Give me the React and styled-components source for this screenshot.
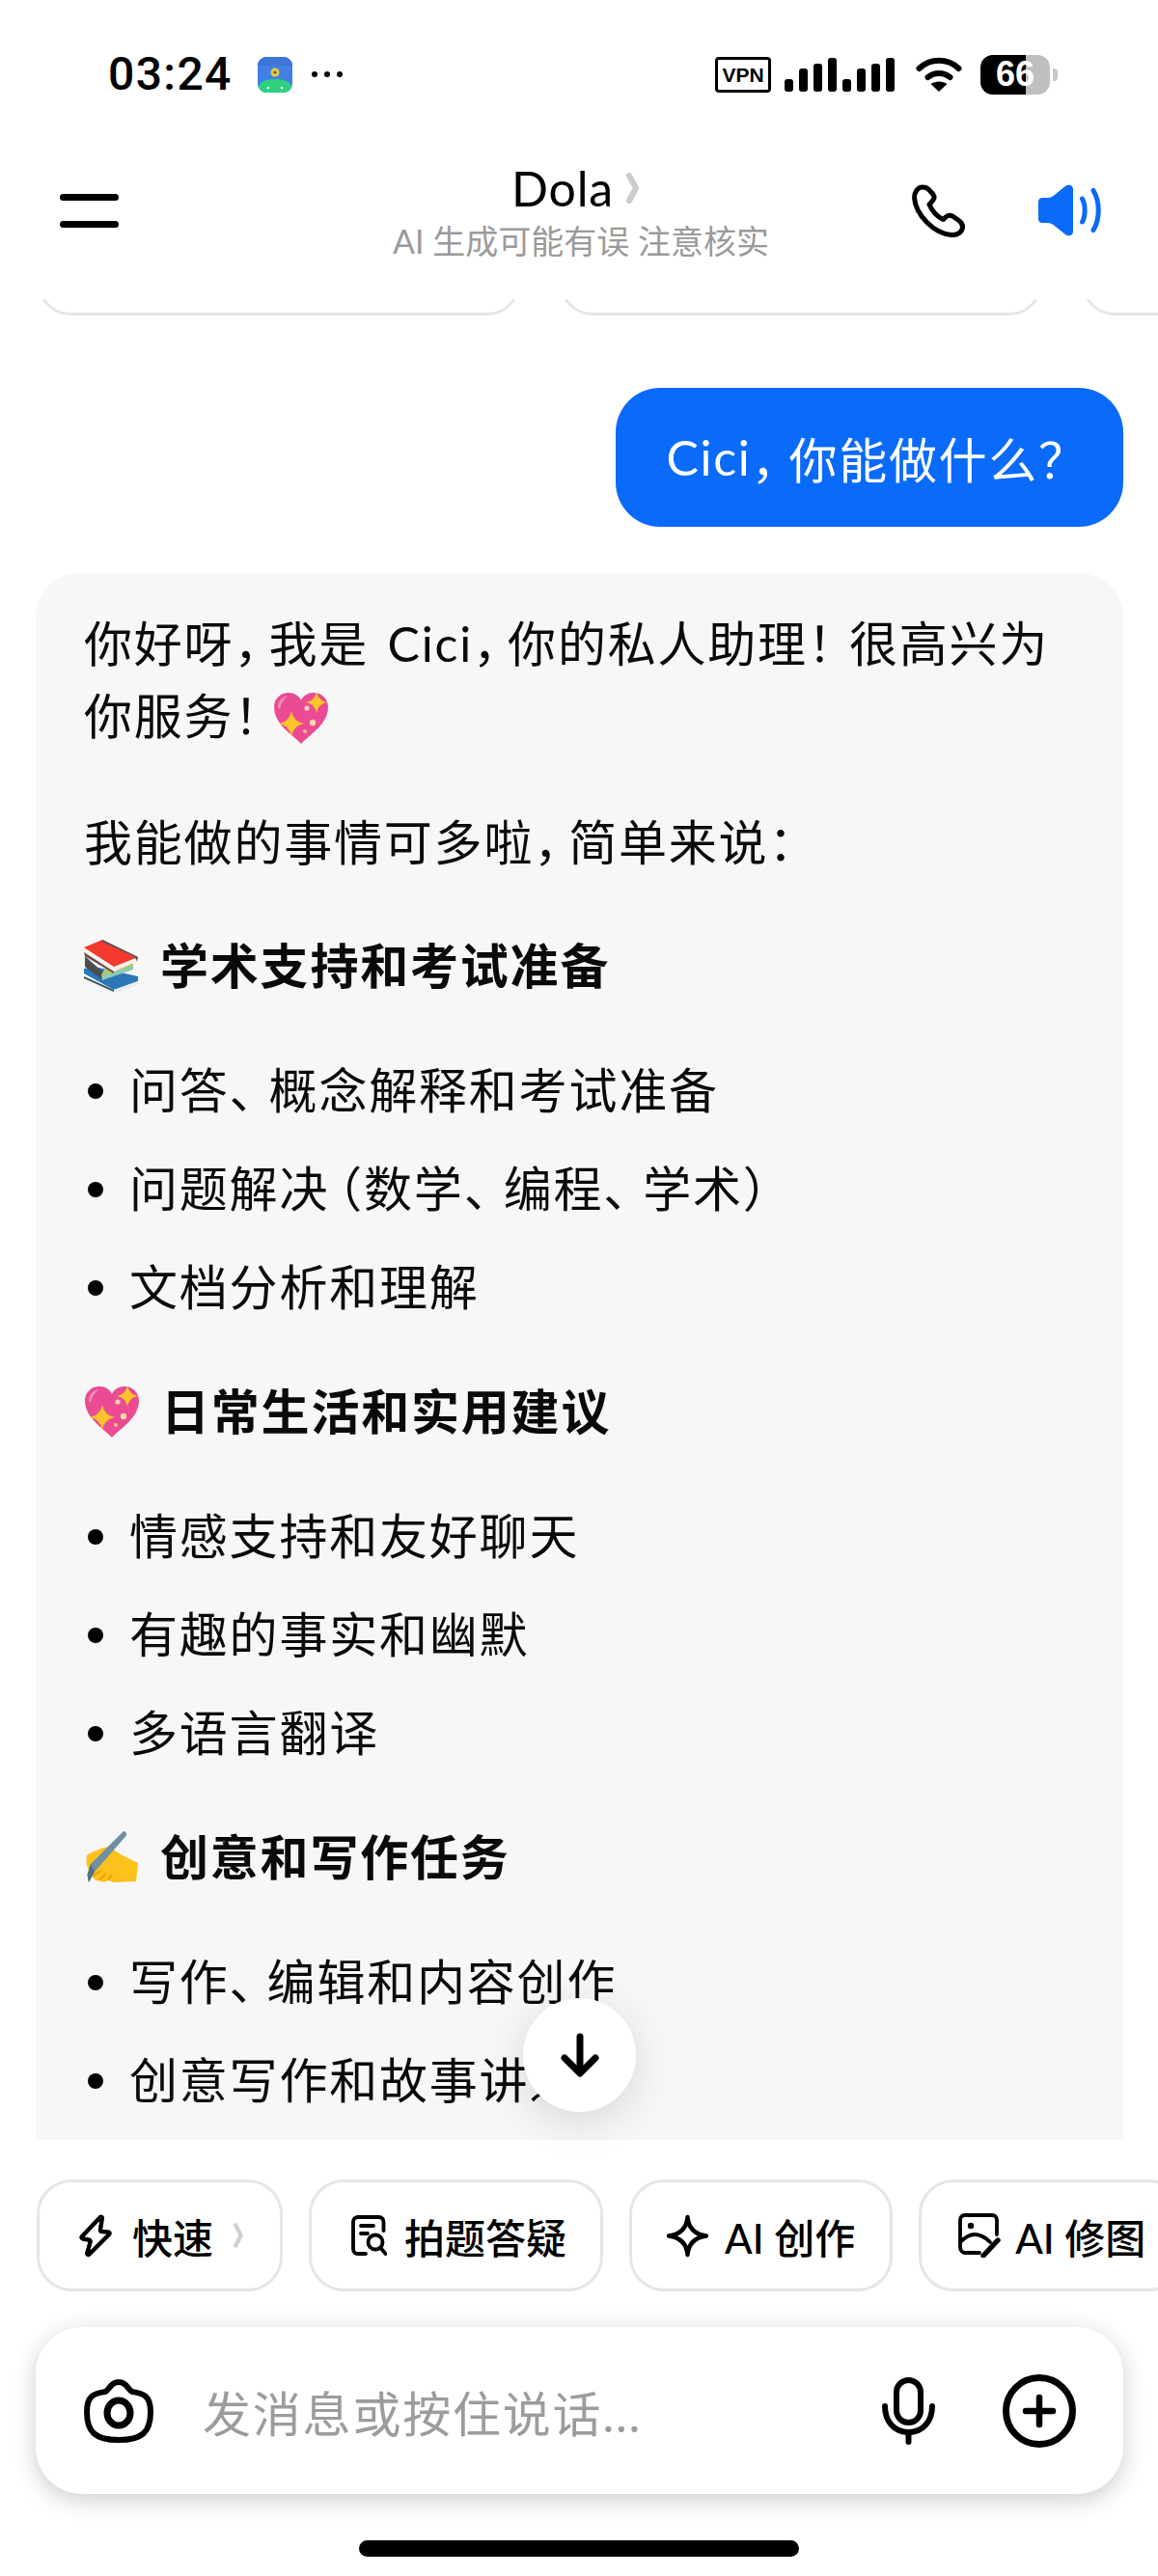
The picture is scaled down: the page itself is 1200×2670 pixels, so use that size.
import React from 'react';
import styled, { createGlobalStyle } from 'styled-components';

const GlobalStyle = createGlobalStyle`
  html, body { margin: 0; padding: 0; background: #fff; }
  * { box-sizing: border-box; }
`;

const Page = styled.div`
  position: relative;
  width: 1200px;
  height: 2670px;
  overflow: hidden;
  display: flex;
  flex-direction: column;
  background: #fff;
  color: #000;
  font-family: "Lato", "Noto Sans CJK SC", sans-serif;
`;

const StatusBar = styled.div`
  flex: 0 0 154px;
  display: flex;
  align-items: center;
  justify-content: space-between;
  padding: 0 104px 0 113px;
  background: #fff;
`;

const StatusGroup = styled.div`
  display: flex;
  align-items: center;
  gap: ${p => p.$gap}px;
`;

const ClockGroup = styled(StatusGroup)`
  margin-left: -1px;
`;

const NetGroup = styled(StatusGroup)`
  margin-left: 8px;
`;

const Clock = styled.span`
  font: 500 48px/1 "Roboto", sans-serif;
  letter-spacing: 1.4px;
`;

const MoreDots = styled.div`
  display: flex;
  gap: 7px;
  margin-left: -6px;
  span {
    width: 6px;
    height: 6px;
    border-radius: 50%;
    background: #000;
  }
`;

const VpnBadge = styled.span`
  width: 58px;
  height: 37px;
  border: 3.5px solid #000;
  border-radius: 4px;
  display: flex;
  align-items: center;
  justify-content: center;
  font: 700 21px/1 "Liberation Sans", sans-serif;
`;

const Signal = styled.div`
  display: flex;
  align-items: flex-end;
  height: 36px;
  gap: 6px;
`;

const SignalBar = styled.i`
  display: block;
  width: 9px;
  height: ${p => p.$h}px;
  background: #000;
  border-radius: 3px;
`;

const Battery = styled.div`
  position: relative;
  width: 72px;
  height: 41px;
  border-radius: 13px;
  background: #bfbfbf;
  overflow: hidden;
  display: flex;
  align-items: center;
  justify-content: center;
  &::before {
    content: '';
    position: absolute;
    left: 0;
    top: 0;
    bottom: 0;
    width: 47px;
    background: #000;
  }
`;

const BatteryText = styled.span`
  position: relative;
  color: #fff;
  font: 700 36px/1 "Liberation Sans", sans-serif;
`;

const BatteryTip = styled.i`
  display: block;
  width: 5px;
  height: 13px;
  margin-left: -11px;
  border-radius: 0 4px 4px 0;
  background: #c8c8c8;
`;

const Header = styled.header`
  position: relative;
  z-index: 2;
  flex: 0 0 156px;
  display: grid;
  grid-template-columns: 1fr auto 1fr;
  align-items: center;
  padding: 0 58px 28px 62px;
  background: #fff;
`;

const MenuButton = styled.div`
  display: flex;
  flex-direction: column;
  gap: 21px;
  i {
    display: block;
    width: 61px;
    height: 7px;
    border-radius: 4px;
    background: #000;
  }
`;

const TitleBlock = styled.div`
  display: flex;
  flex-direction: column;
  align-items: center;
  margin-top: 5px;
`;

const TitleRow = styled.div`
  display: flex;
  align-items: center;
  gap: 13px;
  height: 46px;
  margin-right: 12px;
  font-size: 50px;
  line-height: 46px;
  letter-spacing: .8px;
`;

const Subtitle = styled.div`
  margin-top: 12px;
  font-size: 34px;
  line-height: 40px;
  color: #9a9a9a;
  white-space: nowrap;
`;

const HeaderActions = styled.div`
  display: flex;
  align-items: center;
  justify-content: flex-end;
  gap: 76px;
`;

const Chat = styled.main`
  flex: 1;
  min-height: 0;
  overflow: hidden;
`;

const PromptStrip = styled.div`
  display: flex;
  gap: 41px;
  height: 120px;
  margin-top: -103px;
  padding-left: 39px;
`;

const PromptCard = styled.div`
  flex: 0 0 ${p => p.$w}px;
  border: 3px solid #e6e6e6;
  border-radius: 34px;
`;

const UserBubble = styled.div`
  width: fit-content;
  height: 144px;
  margin: 75px 36px 0 auto;
  padding: 0 52px;
  display: flex;
  align-items: center;
  border-radius: 46px;
  background: #0a6afa;
  color: #fff;
  font-size: 50px;
  letter-spacing: 1.7px;
  white-space: nowrap;
`;

const AnswerCard = styled.article`
  margin: 48px 36px 0 37px;
  padding: 36px 49px 60px 50px;
  border-radius: 46px;
  background: #f7f7f7;
  font-size: 50px;
  line-height: 75px;
  letter-spacing: 1.8px;
  word-spacing: 5px;
  color: #0a0a0a;
`;

const Para = styled.p`
  margin: 0 0 ${p => p.$after}px;
`;

const Section = styled.h3`
  display: flex;
  align-items: center;
  gap: 22px;
  margin: 0 0 54px;
  font-size: 50px;
  line-height: 75px;
  font-weight: 700;
`;

const List = styled.ul`
  list-style: none;
  margin: 0 0 54px;
  padding: 0;
  display: flex;
  flex-direction: column;
  gap: 27px;
`;

const Item = styled.li`
  display: flex;
  align-items: center;
  gap: 27px;
  padding-left: 4px;
  &::before {
    content: '';
    flex: 0 0 16px;
    height: 16px;
    border-radius: 50%;
    background: #000;
  }
`;

const Punct = styled.span`
  letter-spacing: ${p => (p.$open ? '1.8px' : `-${p.$trim ?? 14}px`)};
  margin-left: ${p => (p.$open ? '-16px' : '0')};
  margin-right: ${p => (p.$close ? '2px' : '0')};
`;

const InlineEmoji = styled.span`
  display: inline-block;
  margin-left: 5px;
  vertical-align: -10px;
  line-height: 0;
`;

const ScrollDown = styled.div`
  position: absolute;
  left: 542px;
  top: 2071px;
  z-index: 3;
  width: 117px;
  height: 118px;
  border-radius: 50%;
  background: #fff;
  display: flex;
  align-items: center;
  justify-content: center;
  box-shadow: 0 10px 44px rgba(0, 0, 0, .13);
`;

const Composer = styled.footer`
  position: relative;
  z-index: 2;
  flex: 0 0 452px;
  padding-top: 41px;
  background: #fff;
  display: flex;
  flex-direction: column;
`;

const ChipRow = styled.div`
  display: flex;
  gap: 27px;
  padding-left: 38px;
  overflow: hidden;
`;

const Chip = styled.div`
  flex: 0 0 auto;
  height: 116px;
  display: flex;
  align-items: center;
  gap: ${p => p.$gap}px;
  padding: 0 ${p => p.$right}px 0 ${p => p.$left}px;
  border: 3px solid #e6e6e6;
  border-radius: 36px;
  font-size: 42px;
  font-weight: 500;
  white-space: nowrap;
`;

const InputBar = styled.div`
  height: 173px;
  margin: 37px 36px 0 37px;
  padding: 0 49px 0 50px;
  display: flex;
  align-items: center;
  border-radius: 48px;
  background: #fff;
  box-shadow: 0 6px 24px rgba(0, 0, 0, .2);
`;

const Placeholder = styled.span`
  flex: 1;
  margin-left: 51px;
  font-size: 50px;
  letter-spacing: 1.8px;
  color: #9c9c9c;
`;

const InputActions = styled.div`
  display: flex;
  align-items: center;
  gap: 70px;
`;

const HomeBar = styled.div`
  width: 456px;
  height: 17px;
  margin: 48px auto 0;
  border-radius: 9px;
  background: #000;
`;

const AppBadge = () => (
  <svg width="36" height="37" viewBox="0 0 36 37">
    <defs>
      <clipPath id="badge"><rect width="36" height="37" rx="9" /></clipPath>
    </defs>
    <g clipPath="url(#badge)">
      <rect width="36" height="37" fill="#4280e6" />
      <rect y="0" width="36" height="9" fill="#3f74d8" />
      <path d="M0 37 V33 C2 25 9 23 18 23 C27 23 34 25 36 33 V37 Z" fill="#2fd07f" />
      <circle cx="18" cy="16" r="4.5" fill="#e8c83e" />
      <circle cx="18" cy="16" r="1.6" fill="#5b5a3a" />
      <circle cx="11" cy="32" r="1.3" fill="#fff" />
      <circle cx="25" cy="32" r="1.3" fill="#fff" />
    </g>
  </svg>
);

const WifiIcon = () => (
  <svg width="48" height="36" viewBox="0 0 48 36" fill="none">
    <path d="M3.5 12 C15 1 33 1 44.5 12" stroke="#000" strokeWidth="6" strokeLinecap="round" />
    <path d="M12.5 21 C19 15.5 29 15.5 35.5 21" stroke="#000" strokeWidth="6" strokeLinecap="round" />
    <path d="M24 36 L15.5 28 C20 24.5 28 24.5 32.5 28 Z" fill="#000" />
  </svg>
);

const Chevron = ({ w = 13, h = 32, color = '#cccccc', sw = 6 }) => (
  <svg width={w} height={h} viewBox="0 0 13 32" fill="none" preserveAspectRatio="none">
    <path d="M3 3 L10 16 L3 29" stroke={color} strokeWidth={sw} strokeLinecap="round" strokeLinejoin="round" />
  </svg>
);

const PhoneIcon = () => (
  <svg width="55" height="55" viewBox="0 0 55 55" fill="none">
    <path
      d="M11 3 C6 3 2.5 8 2.5 14 C4 32 23 51 41 52.5 C48 53 52.5 49 52.5 44 C52.5 41 51 39 48 37 L42 33 C39 31.5 37 32 35 34 L32.5 36.5 C25 33 21 28 18 21 L21.5 17 C23.5 15 23.5 13 22 10.5 L17.5 5.5 C15.5 3.5 13.5 3 11 3 Z"
      stroke="#000"
      strokeWidth="5"
      strokeLinejoin="round"
    />
  </svg>
);

const SpeakerIcon = () => (
  <svg width="66" height="54" viewBox="0 0 66 54" fill="none">
    <path
      d="M0 18 C0 15.5 2 14 4 14 H10 C12 14 14 13 15.5 12 L28 2 C31 -0.5 36 0.5 36 5 V49 C36 53.5 31 54.5 28 52 L15.5 42 C14 41 12 40 10 40 H4 C2 40 0 38.5 0 36 Z"
      fill="#0a6afa"
    />
    <path d="M45.5 15 C49 21 49 33 45.5 39" stroke="#0a6afa" strokeWidth="5" strokeLinecap="round" />
    <path d="M57 6.5 C64 18 64 36 57 47.5" stroke="#0a6afa" strokeWidth="5" strokeLinecap="round" />
  </svg>
);

const sparklePath = (x, y, r) =>
  `M${x} ${y - r} Q${x + r * 0.16} ${y - r * 0.16} ${x + r} ${y} Q${x + r * 0.16} ${y + r * 0.16} ${x} ${y + r} Q${x - r * 0.16} ${y + r * 0.16} ${x - r} ${y} Q${x - r * 0.16} ${y - r * 0.16} ${x} ${y - r} Z`;

const HeartEmoji = () => (
  <svg width="58" height="53" viewBox="0 0 58 53">
    <path
      d="M29 53 C22 45 1 33 1 15 C1 6 8 0 16 0 C22 0 27 3 29 8 C31 3 36 0 42 0 C50 0 57 6 57 15 C57 33 36 45 29 53 Z"
      fill="#ea4b92"
    />
    <path d="M5 15 C5 8 10 4 15 3 C11 7 8 11 7 17 Z" fill="#f58dbb" />
    <path d={sparklePath(19, 32, 13)} fill="#fdc32c" />
    <path d={sparklePath(45, 10, 11)} fill="#fdc32c" />
    <circle cx="35" cy="16" r="2.6" fill="#fbd0c0" />
    <circle cx="41" cy="31" r="3.2" fill="#fbd9a8" />
    <circle cx="33" cy="40" r="2.1" fill="#fbb98c" />
  </svg>
);

const BooksEmoji = () => (
  <svg width="57" height="55" viewBox="9 10 57 55">
    <polygon points="9,40 20,38 65,48 65,53 40,62 9,45" fill="#2a78b8" />
    <polygon points="9,48 40,62 65,53 65,57 40,66 9,52" fill="#e9eef0" />
    <polygon points="9,48 40,62 40,64 9,50" fill="#33505e" />
    <polygon points="10,27 28,43 27,51 10,38" fill="#4a4f50" />
    <polygon points="27,46 60,36 60,41 28,52" fill="#8fc9b4" />
    <polygon points="30,41 60,32 60,37 27,47" fill="#b7c95c" />
    <polygon points="9,18 40,38 63,30 63,33 40,43 9,23" fill="#f3f3f0" />
    <polygon points="9,23 40,43 40,45 10,27" fill="#6c4a48" />
    <polygon points="9,18 28,10 65,28 40,38" fill="#f23a2f" />
    <polygon points="28,10 65,28 64,33 63,30 60,27 28,12" fill="#47565c" />
  </svg>
);

const HandEmoji = () => (
  <svg width="57" height="56" viewBox="9 9 57 56">
    <path
      d="M12 34 C18 30 28 26 35 25 L47 33 L65 42 L63 61 L42 62 C38 63 36 60 34 60 C31 62 27 62 25 60 C22 61 19 59 18 56 C14 52 10 42 12 34 Z"
      fill="#fcc21b"
    />
    <path d="M18 56 C22 53 24 52 26 50 M25 60 C28 56 30 55 32 53 M34 60 C35 57 36 56 38 55" stroke="#ee9e0f" strokeWidth="2" fill="none" />
    <path d="M50 9 C52 9 54 12 53 13.5 L20 51 L14 62 L12.5 54 L16 43 Z" fill="#6f8fa3" />
    <path d="M16 43 L20 51 L14 62 L12.5 54 Z" fill="#4f7186" />
  </svg>
);

const BoltIcon = () => (
  <svg width="34" height="45" viewBox="0 0 34 45" fill="none">
    <path
      d="M22 3 C23 2.5 24 3 23.8 4.5 L22 16 C21.8 17.5 22.5 18 24 18 L30 18.5 C31.5 18.5 32 20 31 21 L10.5 41.5 C9.5 42.5 8 41.8 8.3 40.3 L11.5 29 C12 27.5 11 26.5 9.5 26.5 L4 25.5 C2.5 25.2 2 24 3 23 Z"
      stroke="#000"
      strokeWidth="4.4"
      strokeLinejoin="round"
    />
  </svg>
);

const DocSearchIcon = () => (
  <svg width="37" height="42" viewBox="0 0 37 42" fill="none" stroke="#000" strokeWidth="3.8" strokeLinecap="round">
    <path d="M33.5 16 V7 C33.5 4 31.5 2 28.5 2 H7 C4 2 2 4 2 7 V35 C2 38 4 40 7 40 H15" />
    <path d="M10 11 H23" />
    <path d="M10 19 H17" />
    <circle cx="25" cy="28" r="7.5" />
    <path d="M30.5 34 L35.5 40" />
  </svg>
);

const SparkIcon = () => (
  <svg width="45" height="45" viewBox="0 0 45 45" fill="none">
    <path
      d="M22.5 3 C23.5 14 30 21 42 22.5 C30 24 23.5 31 22.5 42 C21.5 31 15 24 3 22.5 C15 21 21.5 14 22.5 3 Z"
      stroke="#000"
      strokeWidth="4.4"
      strokeLinejoin="round"
    />
  </svg>
);

const ImageEditIcon = () => (
  <svg width="44" height="46" viewBox="0 0 44 46" fill="none" stroke="#000" strokeWidth="3.8" strokeLinecap="round">
    <path d="M40 22 V7 C40 4 38 2 35 2 H7 C4 2 2 4 2 7 V35 C2 38 4 41 7 41 H22" />
    <circle cx="13" cy="13" r="3.2" fill="#000" stroke="none" />
    <path d="M2 30 C8 24 12 22 17 22 C23 22 29 26 33 30" />
    <path d="M26 44 L41 28" strokeWidth="5.4" />
  </svg>
);

const CameraIcon = () => (
  <svg width="72" height="66" viewBox="0 0 72 66" fill="none" stroke="#000" strokeWidth="6">
    <path d="M22 13 C27 11 27 3 36 3 C45 3 45 11 50 13 C61 15 69 16 69 34 C69 55 60 63 36 63 C12 63 3 55 3 34 C3 16 11 15 22 13 Z" strokeLinejoin="round" />
    <ellipse cx="36" cy="35" rx="12" ry="13" strokeWidth="7" />
  </svg>
);

const MicIcon = () => (
  <svg width="55" height="70" viewBox="0 0 55 70" fill="none" stroke="#000" strokeWidth="6" strokeLinecap="round">
    <rect x="15" y="3" width="25" height="44" rx="12.5" />
    <path d="M3 30 C3 46 13 57 27.5 57 C42 57 52 46 52 30" />
    <path d="M27.5 57 V67" />
  </svg>
);

const PlusIcon = () => (
  <svg width="76" height="76" viewBox="0 0 76 76" fill="none" stroke="#000" strokeLinecap="round">
    <circle cx="38" cy="38" r="34.5" strokeWidth="7" />
    <path d="M38 24 V52 M24 38 H52" strokeWidth="6.5" />
  </svg>
);

const ArrowDownIcon = () => (
  <svg width="40" height="46" viewBox="0 0 40 46" fill="none" stroke="#000" strokeWidth="7" strokeLinecap="round" strokeLinejoin="round">
    <path d="M20 4 V41" />
    <path d="M4 26 L20 42 L36 26" />
  </svg>
);

const sections = [
  {
    emoji: <BooksEmoji />,
    title: '学术支持和考试准备',
    items: [
      <>问答<Punct $trim={9}>、</Punct>概念解释和考试准备</>,
      <>问题解决<Punct $open>（</Punct>数学<Punct $trim={9}>、</Punct>编程<Punct $trim={9}>、</Punct>学术<Punct $close>）</Punct></>,
      <>文档分析和理解</>,
    ],
  },
  {
    emoji: <HeartEmoji />,
    title: '日常生活和实用建议',
    items: [<>情感支持和友好聊天</>, <>有趣的事实和幽默</>, <>多语言翻译</>],
  },
  {
    emoji: <HandEmoji />,
    title: '创意和写作任务',
    items: [<>写作<Punct $trim={11}>、</Punct>编辑和内容创作</>, <>创意写作和故事讲述</>, <>头脑风暴和灵感</>],
  },
];

const signalBars = [13, 24, 29, 35, 13, 24, 29, 35];

export default function App() {
  return (
    <Page>
      <GlobalStyle />
      <StatusBar>
        <ClockGroup $gap={26}>
          <Clock>03:24</Clock>
          <AppBadge />
          <MoreDots><span /><span /><span /></MoreDots>
        </ClockGroup>
        <StatusGroup $gap={14}>
          <VpnBadge>VPN</VpnBadge>
          <Signal>
            {signalBars.map((h, i) => <SignalBar key={i} $h={h} />)}
          </Signal>
          <NetGroup $gap={19}>
            <WifiIcon />
            <Battery><BatteryText>66</BatteryText></Battery>
          </NetGroup>
          <BatteryTip />
        </StatusGroup>
      </StatusBar>

      <Header>
        <MenuButton><i /><i /></MenuButton>
        <TitleBlock>
          <TitleRow>Dola<Chevron /></TitleRow>
          <Subtitle>AI 生成可能有误 注意核实</Subtitle>
        </TitleBlock>
        <HeaderActions>
          <PhoneIcon />
          <SpeakerIcon />
        </HeaderActions>
      </Header>

      <Chat>
        <PromptStrip>
          <PromptCard $w={500} />
          <PromptCard $w={500} />
          <PromptCard $w={500} />
        </PromptStrip>
        <UserBubble>Cici<Punct $trim={11}>，</Punct>你能做什么<Punct>？</Punct></UserBubble>
        <AnswerCard>
          <Para $after={56}>
            你好呀<Punct>，</Punct>我是 Cici<Punct>，</Punct>你的私人助理<Punct $trim={7}>！</Punct>很高兴为你服务<Punct>！</Punct>
            <InlineEmoji><HeartEmoji /></InlineEmoji>
          </Para>
          <Para $after={53}>我能做的事情可多啦<Punct>，</Punct>简单来说<Punct>：</Punct></Para>
          {sections.map(section => (
            <React.Fragment key={section.title}>
              <Section>{section.emoji}<span>{section.title}</span></Section>
              <List>
                {section.items.map((item, i) => <Item key={i}><span>{item}</span></Item>)}
              </List>
            </React.Fragment>
          ))}
        </AnswerCard>
      </Chat>

      <ScrollDown><ArrowDownIcon /></ScrollDown>

      <Composer>
        <ChipRow>
          <Chip $left={41} $right={38} $gap={21}>
            <BoltIcon />
            <span>快速</span>
            <Chevron w={10} h={26} color="#d0d0d0" sw={5.5} />
          </Chip>
          <Chip $left={41} $right={35} $gap={18}>
            <DocSearchIcon />
            <span>拍题答疑</span>
          </Chip>
          <Chip $left={35} $right={36} $gap={16}>
            <SparkIcon />
            <span>AI 创作</span>
          </Chip>
          <Chip $left={38} $right={36} $gap={15}>
            <ImageEditIcon />
            <span>AI 修图</span>
          </Chip>
        </ChipRow>
        <InputBar>
          <CameraIcon />
          <Placeholder>发消息或按住说话...</Placeholder>
          <InputActions>
            <MicIcon />
            <PlusIcon />
          </InputActions>
        </InputBar>
        <HomeBar />
      </Composer>
    </Page>
  );
}
